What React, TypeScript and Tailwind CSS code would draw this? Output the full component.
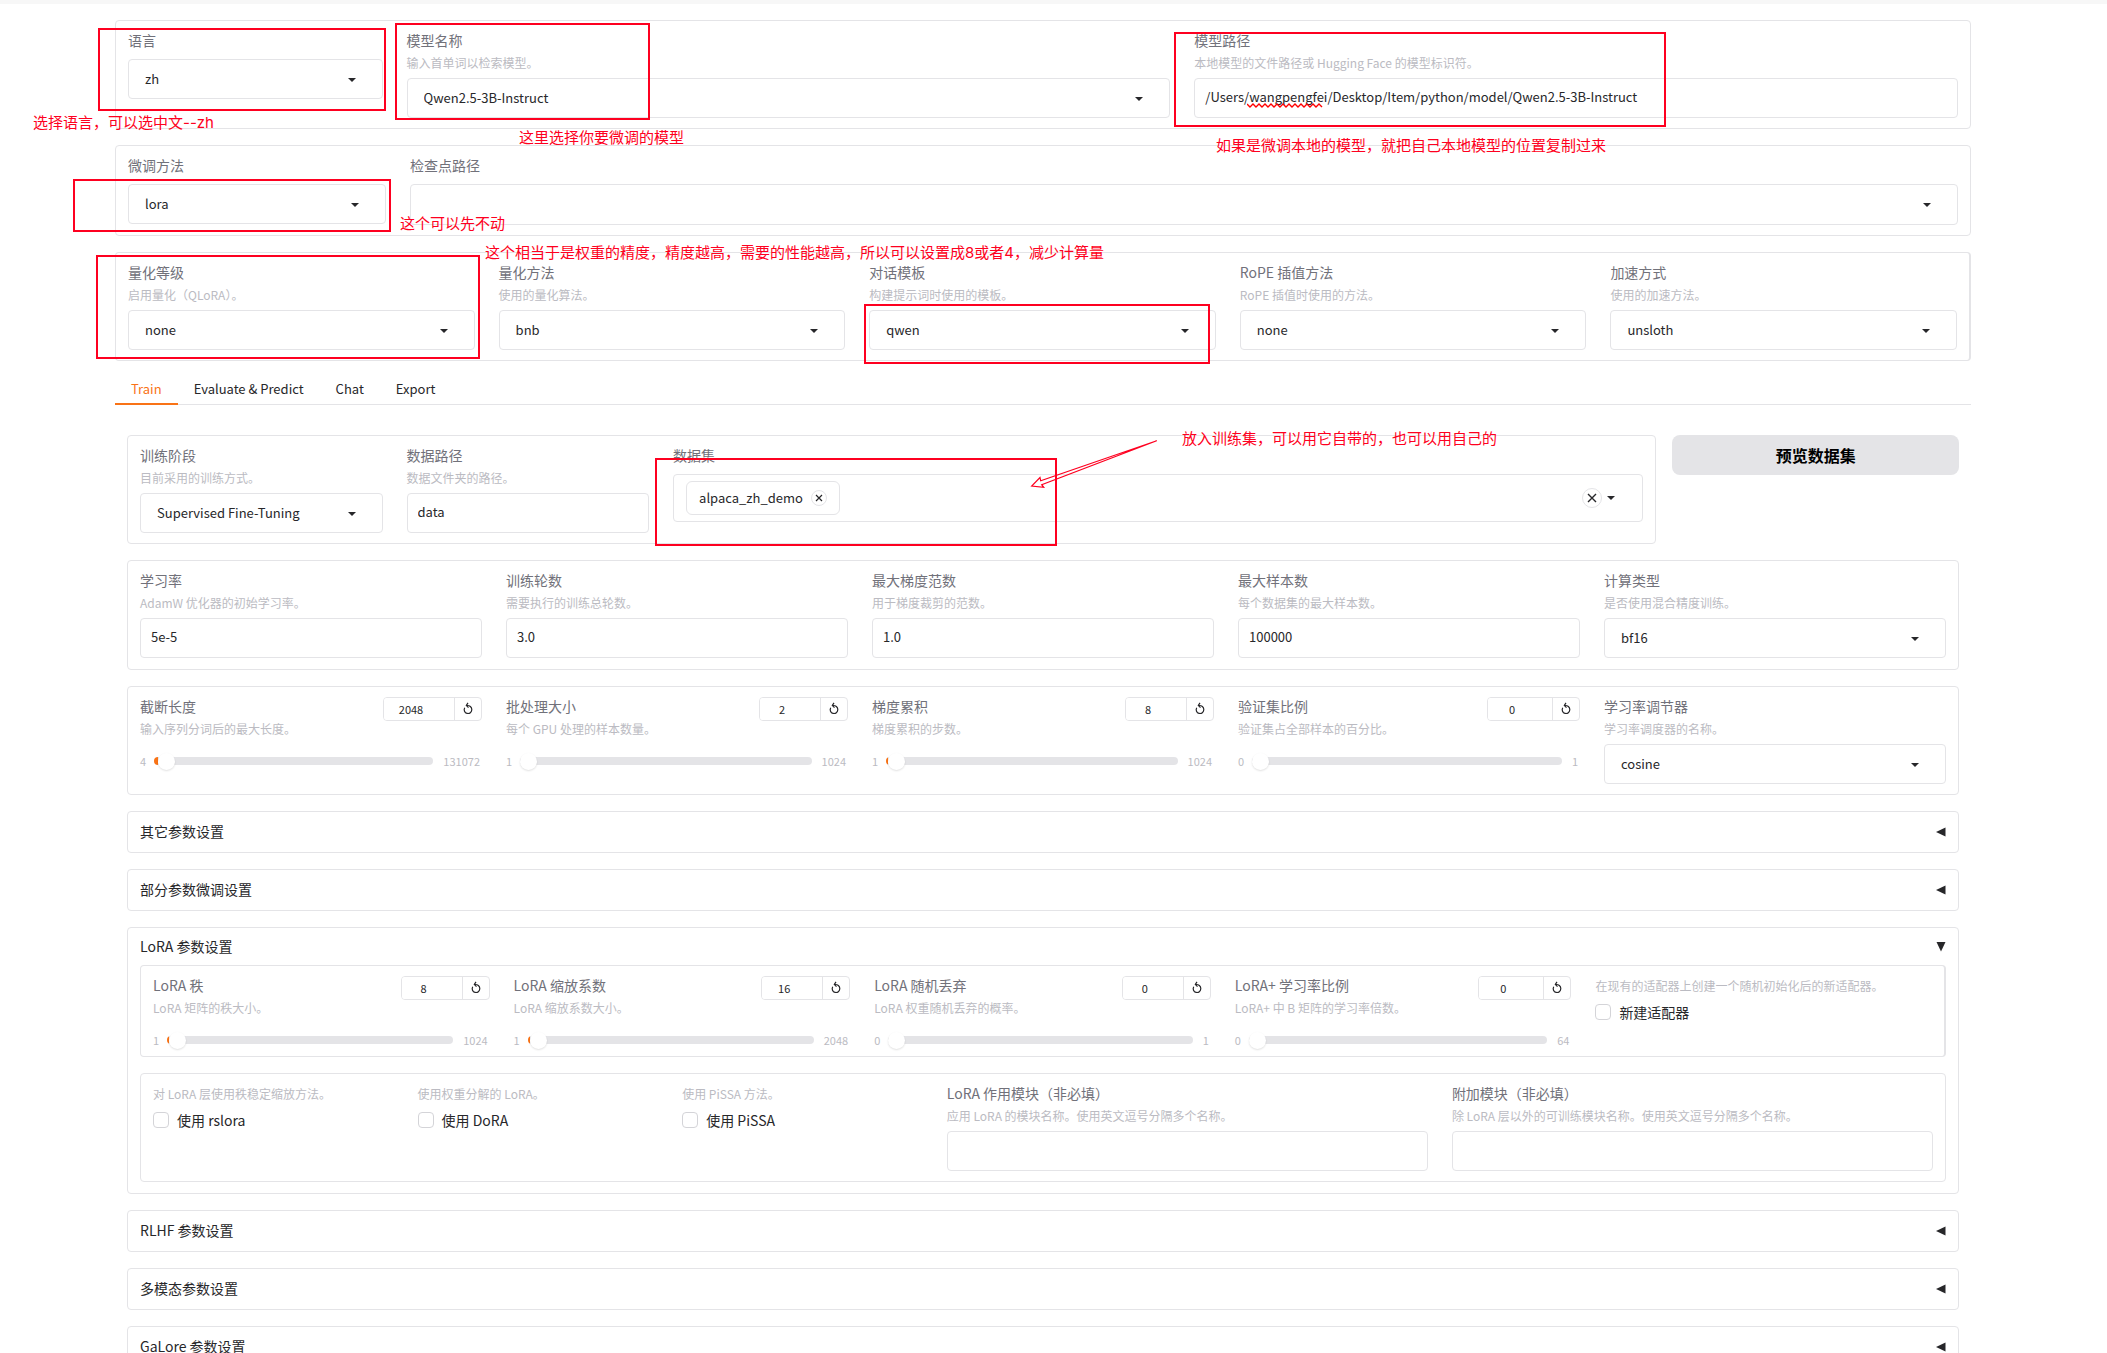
import React, { useId, useState } from 'react';
import clsx from 'clsx';

type FieldProps = { label: string; info?: string; className?: string };

function Field({ label, info, htmlFor, className, children }: FieldProps & { htmlFor: string; children: React.ReactNode }) {
  return (
    <div className={clsx('flex min-w-0 flex-col', className ?? 'flex-1')}>
      <label htmlFor={htmlFor} className="block h-5 whitespace-nowrap text-sm leading-[18px] text-[#71717a]">{label}</label>
      {info ? <p className="mb-1 whitespace-nowrap text-xs leading-[23px] text-[#bbbbc2]">{info}</p> : <div className="h-2" />}
      {children}
    </div>
  );
}

function Caret({ className }: { className?: string }) {
  return (
    <svg viewBox="0 0 18 18" className={clsx('h-[18px] w-[18px] fill-[#27272a]', className)} aria-hidden="true">
      <path d="M5 7l4 4 4-4z" />
    </svg>
  );
}

function Dropdown({ label, info, className, value, tall }: FieldProps & { value: string; tall?: boolean }) {
  const id = useId();
  return (
    <Field label={label} info={info} htmlFor={id} className={className}>
      <div className="relative">
        <select id={id} defaultValue={value}
          className={clsx('w-full appearance-none rounded border border-[#e4e4e7] bg-white px-4 text-[13px] text-[#27272a] outline-none', tall ? 'h-[41px]' : 'h-10')}>
          <option value={value}>{value}</option>
        </select>
        <Caret className="pointer-events-none absolute right-[22px] top-3" />
      </div>
    </Field>
  );
}

function TextBox({ label, info, className, value = '' }: FieldProps & { value?: string }) {
  const id = useId();
  return (
    <Field label={label} info={info} htmlFor={id} className={className}>
      <input id={id} type="text" defaultValue={value} spellCheck={false}
        className="h-10 w-full rounded border border-[#e4e4e7] bg-white px-2.5 pb-1 text-[13px] text-[#27272a] outline-none" />
    </Field>
  );
}

function Slider({ label, info, min, max, value, wide }: { label: string; info: string; min: number; max: number; value: number; wide?: string }) {
  const id = useId();
  const [current, setCurrent] = useState(value);
  const pct = ((current - min) / (max - min)) * 100;
  return (
    <div className="flex min-w-0 flex-1 flex-col">
      <div className="flex h-5 items-start justify-between">
        <label htmlFor={id} className="text-sm leading-[18px] text-[#71717a]">{label}</label>
        <div className="flex h-6 overflow-hidden rounded border border-[#e4e4e7] bg-white">
          <input type="text" inputMode="numeric" aria-label={label} value={current}
            onChange={(e) => setCurrent(Number(e.target.value) || min)}
            className={clsx('bg-white pr-4 text-center text-[11px] text-[#27272a] outline-none', wide ?? 'w-[60px]')} />
          <button type="button" aria-label="重置" onClick={() => setCurrent(value)}
            className="flex w-[27px] items-center justify-center border-l border-[#e4e4e7]">
            <svg viewBox="0 0 12 14" className="h-3.5 w-3 fill-none stroke-[#27272a]" strokeWidth="1.2" aria-hidden="true">
              <path d="M5 3.500C7.600 3.300 9.800 5.100 9.800 7.600A3.800 3.800 0 1 1 2.700 5.800" />
              <path d="M6 0.800L4.300 3.400L6.500 5.600" />
            </svg>
          </button>
        </div>
      </div>
      <p className="text-xs leading-[23px] text-[#bbbbc2]">{info}</p>
      <div className="mt-[11px] flex h-5 items-center gap-2 text-[11px] text-[#bbbbc2]">
        <span>{min}</span>
        <input id={id} type="range" min={min} max={max} step="any" value={current}
          onChange={(e) => setCurrent(Math.round(Number(e.target.value)))}
          style={{ backgroundImage: `linear-gradient(to right, #f97316 ${pct}%, #e4e4e7 ${pct}%)` }}
          className="h-2 min-w-0 flex-1 appearance-none rounded-full [&::-webkit-slider-thumb]:h-[17px] [&::-webkit-slider-thumb]:w-[17px] [&::-webkit-slider-thumb]:appearance-none [&::-webkit-slider-thumb]:rounded-full [&::-webkit-slider-thumb]:bg-white [&::-webkit-slider-thumb]:shadow-[0_1px_2px_rgba(0,0,0,0.12)]" />
        <span className="px-0.5">{max}</span>
      </div>
    </div>
  );
}

function Check({ label, info }: { label: string; info: string }) {
  return (
    <div className="min-w-0 flex-1">
      <p className="whitespace-nowrap text-xs leading-5 text-[#bbbbc2]">{info}</p>
      <label className="mt-1.5 flex items-center gap-2 text-sm leading-5 text-[#27272a]">
        <input type="checkbox" className="h-4 w-4 appearance-none rounded border border-[#d4d4d8] bg-white checked:bg-[#f97316]" />
        {label}
      </label>
    </div>
  );
}

function Group({ children, className }: { children: React.ReactNode; className?: string }) {
  return (
    <div className={clsx('flex gap-6 rounded border border-[#e4e4e7] bg-white px-3 py-2.5', className)}>{children}</div>
  );
}

function Accordion({ title, open = false, children }: { title: string; open?: boolean; children?: React.ReactNode }) {
  const [expanded, setExpanded] = useState(open);
  return (
    <section className="rounded border border-[#e4e4e7] bg-white px-3">
      <button type="button" onClick={() => setExpanded(!expanded)} aria-expanded={expanded}
        className={clsx('flex w-full items-center justify-between text-sm text-[#27272a]', expanded ? 'h-[37px]' : 'h-10')}>
        <span className="pb-0.5">{title}</span>
        <svg viewBox="0 0 10 10" className="h-2.5 w-2.5 fill-[#27272a]" aria-hidden="true">
          {expanded ? <path d="M0.500 0h9L5 9.500z" /> : <path d="M9.500 0.500v9L0 5z" />}
        </svg>
      </button>
      {expanded && children}
    </section>
  );
}

const TABS = ['Train', 'Evaluate & Predict', 'Chat', 'Export'];

// Hand-drawn review notes laid over the page
function Note({ children, className }: { children: React.ReactNode; className: string }) {
  return <p className={clsx('absolute whitespace-nowrap text-[15px] leading-5', className)}>{children}</p>;
}

function Annotations() {
  return (
    <div className="pointer-events-none absolute inset-0 font-['Inter','Noto_Sans_CJK_SC',sans-serif] text-[#fe0020]">
      <div className="absolute left-[98px] top-[28px] h-[83px] w-[288px] border-2" />
      <div className="absolute left-[395px] top-[23px] h-[97px] w-[255px] border-2" />
      <div className="absolute left-[1174px] top-[32px] h-[95px] w-[492px] border-2" />
      <div className="absolute left-[73px] top-[179px] h-[53px] w-[318px] border-2" />
      <div className="absolute left-[96px] top-[255px] h-[104px] w-[384px] border-2" />
      <div className="absolute left-[864px] top-[304px] h-[60px] w-[346px] border-2" />
      <div className="absolute left-[655px] top-[458px] h-[88px] w-[402px] border-2" />
      <Note className="left-[33px] top-[113px]">选择语言，可以选中文--zh</Note>
      <Note className="left-[519px] top-[128px]">这里选择你要微调的模型</Note>
      <Note className="left-[1216px] top-[136px]">如果是微调本地的模型，就把自己本地模型的位置复制过来</Note>
      <Note className="left-[400px] top-[214px]">这个可以先不动</Note>
      <Note className="left-[485px] top-[243px]">这个相当于是权重的精度，精度越高，需要的性能越高，所以可以设置成8或者4，减少计算量</Note>
      <Note className="left-[1182px] top-[429px]">放入训练集，可以用它自带的，也可以用自己的</Note>
      <svg viewBox="0 0 128 50" className="absolute left-[1030px] top-[439px] h-[50px] w-[128px] fill-none stroke-current" strokeWidth="1.2">
        <path d="M126.700 1.700L10.700 41.800L10 38.500L1.700 47L13.700 48.300L11.700 45.700Z" />
      </svg>
      <svg viewBox="0 0 76 5" className="absolute left-[1247px] top-[103px] h-[5px] w-[76px] fill-none stroke-[#ff0000]" strokeWidth="1.4">
        <path d="M0 1l3 3 3-3 3 3 3-3 3 3 3-3 3 3 3-3 3 3 3-3 3 3 3-3 3 3 3-3 3 3 3-3 3 3 3-3 3 3 3-3 3 3 3-3 3 3 3-3 3 3" />
      </svg>
    </div>
  );
}

export default function App() {
  const [tab, setTab] = useState('Train');
  const datasetId = useId();

  return (
    <div className="relative h-screen overflow-hidden bg-white font-['Noto_Sans_CJK_SC',sans-serif]">
      <div className="h-1 bg-[#f7f7f7]" />
      <main className="flex flex-col gap-4 pl-[115px] pr-[136px] pt-4">
        <Group>
          <Dropdown label="语言" value="zh" />
          <Dropdown label="模型名称" info="输入首单词以检索模型。" value="Qwen2.5-3B-Instruct" className="flex-3" />
          <TextBox label="模型路径" info="本地模型的文件路径或 Hugging Face 的模型标识符。" value="/Users/wangpengfei/Desktop/Item/python/model/Qwen2.5-3B-Instruct" className="flex-3" />
        </Group>
        <Group>
          <Dropdown label="微调方法" value="lora" />
          <Dropdown label="检查点路径" value="" className="flex-6" tall />
        </Group>
        <Group className="border-r-2">
          <Dropdown label="量化等级" info="启用量化（QLoRA）。" value="none" />
          <Dropdown label="量化方法" info="使用的量化算法。" value="bnb" />
          <Dropdown label="对话模板" info="构建提示词时使用的模板。" value="qwen" />
          <Dropdown label="RoPE 插值方法" info="RoPE 插值时使用的方法。" value="none" />
          <Dropdown label="加速方式" info="使用的加速方法。" value="unsloth" />
        </Group>

        <div>
          <div role="tablist" className="flex border-b border-[#e4e4e7]">
            {TABS.map((t) => (
              <button key={t} type="button" role="tab" aria-selected={t === tab} onClick={() => setTab(t)}
                className={clsx('-mb-px h-7 border-b-2 px-4 pb-0.5 text-[13px] leading-5', t === tab ? 'border-[#f97316] text-[#f97316]' : 'border-transparent text-[#27272a]')}>
                {t}
              </button>
            ))}
          </div>

          <div className="flex flex-col gap-4 px-3 pt-[30px]">
            <div className="flex items-start gap-4">
              <div className="min-w-0 flex-[16]">
                <Group>
                  <Dropdown label="训练阶段" info="目前采用的训练方式。" value="Supervised Fine-Tuning" />
                  <TextBox label="数据路径" info="数据文件夹的路径。" value="data" />
                  <Field label="数据集" htmlFor={datasetId} className="flex-4">
                    <div className="flex h-12 items-center rounded border border-[#e4e4e7] bg-white pl-3 pr-[22px]">
                      <span className="flex h-[34px] items-center gap-2 rounded-md border border-[#e4e4e7] px-3 text-[13px] text-[#27272a]">
                        alpaca_zh_demo
                        <button type="button" aria-label="移除" className="flex h-4 w-4 items-center justify-center rounded-full border border-[#e4e4e7]">
                          <svg viewBox="0 0 8 8" className="h-2 w-2 stroke-[#27272a]" strokeWidth="1.2"><path d="M1 1l6 6M7 1l-6 6" /></svg>
                        </button>
                      </span>
                      <input id={datasetId} type="text" className="min-w-0 flex-1 outline-none" />
                      <button type="button" aria-label="清空" className="flex h-5 w-5 items-center justify-center rounded-full border border-[#e4e4e7]">
                        <svg viewBox="0 0 10 10" className="h-2.5 w-2.5 stroke-[#27272a]" strokeWidth="1.4"><path d="M1 1l8 8M9 1l-8 8" /></svg>
                      </button>
                      <Caret />
                    </div>
                  </Field>
                </Group>
              </div>
              <button type="button" className="h-10 min-w-0 flex-[3] rounded-lg bg-[#e4e4e7] text-base font-bold text-black">预览数据集</button>
            </div>

            <Group className="pb-[11px]">
              <TextBox label="学习率" info="AdamW 优化器的初始学习率。" value="5e-5" />
              <TextBox label="训练轮数" info="需要执行的训练总轮数。" value="3.0" />
              <TextBox label="最大梯度范数" info="用于梯度裁剪的范数。" value="1.0" />
              <TextBox label="最大样本数" info="每个数据集的最大样本数。" value="100000" />
              <Dropdown label="计算类型" info="是否使用混合精度训练。" value="bf16" />
            </Group>

            <Group>
              <Slider label="截断长度" info="输入序列分词后的最大长度。" min={4} max={131072} value={2048} wide="w-[70px]" />
              <Slider label="批处理大小" info="每个 GPU 处理的样本数量。" min={1} max={1024} value={2} />
              <Slider label="梯度累积" info="梯度累积的步数。" min={1} max={1024} value={8} />
              <Slider label="验证集比例" info="验证集占全部样本的百分比。" min={0} max={1} value={0} wide="w-[64px]" />
              <Dropdown label="学习率调节器" info="学习率调度器的名称。" value="cosine" />
            </Group>

            <Accordion title="其它参数设置" />
            <Accordion title="部分参数微调设置" />
            <Accordion title="LoRA 参数设置" open>
              <div className="flex flex-col gap-4 pb-[11px]">
                <Group className="border-r-2 pb-1.5">
                  <Slider label="LoRA 秩" info="LoRA 矩阵的秩大小。" min={1} max={1024} value={8} />
                  <Slider label="LoRA 缩放系数" info="LoRA 缩放系数大小。" min={1} max={2048} value={16} />
                  <Slider label="LoRA 随机丢弃" info="LoRA 权重随机丢弃的概率。" min={0} max={1} value={0} />
                  <Slider label="LoRA+ 学习率比例" info="LoRA+ 中 B 矩阵的学习率倍数。" min={0} max={64} value={0} wide="w-[64px]" />
                  <Check label="新建适配器" info="在现有的适配器上创建一个随机初始化后的新适配器。" />
                </Group>
                <Group>
                  <Check label="使用 rslora" info="对 LoRA 层使用秩稳定缩放方法。" />
                  <Check label="使用 DoRA" info="使用权重分解的 LoRA。" />
                  <Check label="使用 PiSSA" info="使用 PiSSA 方法。" />
                  <TextBox label="LoRA 作用模块（非必填）" info="应用 LoRA 的模块名称。使用英文逗号分隔多个名称。" className="flex-2" />
                  <TextBox label="附加模块（非必填）" info="除 LoRA 层以外的可训练模块名称。使用英文逗号分隔多个名称。" className="flex-2" />
                </Group>
              </div>
            </Accordion>
            <Accordion title="RLHF 参数设置" />
            <Accordion title="多模态参数设置" />
            <Accordion title="GaLore 参数设置" />
          </div>
        </div>
      </main>
      <Annotations />
    </div>
  );
}
